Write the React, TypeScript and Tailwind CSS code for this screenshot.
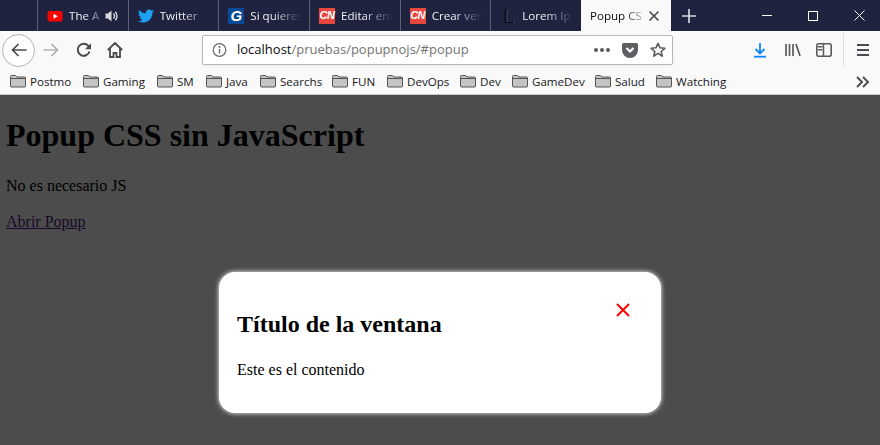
import { FaTwitter } from "react-icons/fa";

const uiFont = "font-['Open_Sans','Noto_Sans',sans-serif]";

const fade = "[mask-image:linear-gradient(to_right,black_40%,transparent_92%)]";

function Youtube() {
  return (
    <svg width="16" height="16" viewBox="0 0 16 16" className="shrink-0">
      <rect x="0.5" y="3" width="15" height="10.5" rx="2.5" fill="#ff0000" />
      <path d="M6.5 5.8v5l4.2-2.5z" fill="#fff" />
    </svg>
  );
}

function CnIcon() {
  return (
    <div className="flex h-4 w-4 shrink-0 items-center justify-center bg-[#e8473f] font-['Liberation_Sans',sans-serif] text-[11px] font-bold italic leading-none tracking-[-0.5px] text-white">
      CN
    </div>
  );
}

function GIcon() {
  return (
    <div className="flex h-4 w-4 shrink-0 items-center justify-center bg-[#0a4a94] font-['Liberation_Sans',sans-serif] text-[15px] font-bold italic leading-none text-white">
      G
    </div>
  );
}

function LoremIcon() {
  return <div className="flex h-4 w-4 shrink-0 items-center justify-center font-['Liberation_Serif',serif] text-[20px] leading-none text-[#0b0c18] [text-shadow:1px_0_0_#4a4c60]">L</div>;
}

function Speaker() {
  return (
    <svg width="14" height="14" viewBox="0 0 14 14" className="shrink-0">
      <path d="M0.5 4.5h2.5L6.5 1.5v11L3 9.5H0.5z" fill="#d8d9e0" />
      <path d="M8.5 4.5a3.5 3.5 0 0 1 0 5M10.3 2.8a6 6 0 0 1 0 8.4" fill="none" stroke="#d8d9e0" strokeWidth="1.4" />
    </svg>
  );
}

function Tab({ icon, label, extra, mask = fade }: { icon: React.ReactNode; label: string; extra?: React.ReactNode; mask?: string }) {
  return (
    <div className="flex h-full w-[90.67px] shrink-0 items-center gap-[6px] border-l border-[#5c5f75] pl-[9px] pr-[3px]">
      {icon}
      <span className={`min-w-0 flex-1 whitespace-nowrap text-[11.6px] text-[#f0f0f4] ${mask}`}>{label}</span>
      {extra}
    </div>
  );
}

function Folder() {
  return (
    <svg width="16" height="14" viewBox="0 0 16 14" className="shrink-0">
      <path d="M0.5 2.5a1 1 0 0 1 1-1h4l1.5 1.5h7.5a1 1 0 0 1 1 1v8a1 1 0 0 1-1 1h-13a1 1 0 0 1-1-1z" fill="#c4c4c4" stroke="#555" />
      <path d="M1 4.5h14" stroke="#555" />
    </svg>
  );
}

export default function App() {
  return (
    <div className="flex h-[445px] w-[880px] flex-col overflow-hidden bg-white">
      <header className={`${uiFont} shrink-0`}>
        {/* tab strip */}
        <div className="flex h-[31px] items-stretch bg-[#202340]">
          <div className="w-[37px] shrink-0" />
          <Tab
            icon={<Youtube />}
            label="The A"
            mask="[mask-image:linear-gradient(to_right,black_55%,rgba(0,0,0,0.35)_100%)]"
            extra={<span className="mr-[6px]"><Speaker /></span>}
          />
          <Tab icon={<FaTwitter className="shrink-0 text-[16px] text-[#1da1f2]" />} label="Twitter" />
          <Tab icon={<GIcon />} label="Si quieres" />
          <Tab icon={<CnIcon />} label="Editar ent" />
          <Tab icon={<CnIcon />} label="Crear ven" />
          <Tab icon={<LoremIcon />} label="Lorem Ip" />
          <div className="flex h-full w-[90px] shrink-0 items-center bg-[#f9f9fa] pl-[9px] pr-[11px]">
            <span className="min-w-0 flex-1 whitespace-nowrap text-[11.6px] text-[#0c0c0d] [mask-image:linear-gradient(to_right,black_60%,transparent_100%)]">Popup CS</span>
            <svg width="12" height="12" viewBox="0 0 12 12" className="shrink-0">
              <path d="M1.5 1.5l9 9M10.5 1.5l-9 9" stroke="#4a4a4f" strokeWidth="1.7" />
            </svg>
          </div>
          <div className="flex w-[36px] shrink-0 items-center justify-center">
            <svg width="14" height="14" viewBox="0 0 14 14">
              <path d="M7 0v14M0 7h14" stroke="#d8d9e0" strokeWidth="1.7" />
            </svg>
          </div>
          <div className="flex-1" />
          <div className="flex w-[136px] shrink-0 items-center">
            <div className="flex w-[46px] items-center justify-center">
              <div className="h-px w-[10px] bg-white" />
            </div>
            <div className="flex w-[46px] items-center justify-center">
              <div className="h-[10px] w-[10px] border border-white" />
            </div>
            <div className="flex w-[44px] items-center justify-center pl-[2px]">
              <svg width="11" height="11" viewBox="0 0 11 11">
                <path d="M0.5 0.5l10 10M10.5 0.5l-10 10" stroke="#fff" strokeWidth="1" />
              </svg>
            </div>
          </div>
        </div>

        {/* nav bar */}
        <div className="flex h-[38px] items-center bg-[#f9f9fa] pl-[2px]">
          <div className="flex h-[33px] w-[33px] shrink-0 items-center justify-center rounded-full border border-[#b1b1b3] bg-white">
            <svg width="16" height="16" viewBox="0 0 16 16">
              <path d="M15.5 8H1.5M7.5 2L1.5 8l6 6" fill="none" stroke="#4a4a4f" strokeWidth="1.7" />
            </svg>
          </div>
          <div className="ml-[8px] flex w-[16px] shrink-0 justify-center">
            <svg width="16" height="16" viewBox="0 0 16 16">
              <path d="M0.5 8h14M8.5 2l6 6-6 6" fill="none" stroke="#b1b1b3" strokeWidth="1.7" />
            </svg>
          </div>
          <div className="ml-[17px] flex w-[16px] shrink-0 justify-center">
            <svg width="16" height="16" viewBox="0 0 16 16">
              <path d="M13.5 9.5A6 6 0 1 1 12.3 3.8L14.5 6" fill="none" stroke="#4a4a4f" strokeWidth="2" />
              <path d="M15 1.2v6h-6z" fill="#4a4a4f" />
            </svg>
          </div>
          <div className="ml-[15px] flex w-[16px] shrink-0 justify-center">
            <svg width="16" height="16" viewBox="0 0 16 16">
              <path d="M0.8 8L8 1l7.2 7M3 6.5V15h3.5v-4h3v4H13V6.5" fill="none" stroke="#4a4a4f" strokeWidth="1.8" />
            </svg>
          </div>
          <div className="ml-[79px] flex h-[30px] w-[471px] shrink-0 items-center rounded-[2px] border border-[#b8b8ba] bg-white pl-[9px] pr-[6px] shadow-[0_1px_2px_rgba(0,0,0,0.08)]">
            <svg width="16" height="16" viewBox="0 0 16 16" className="shrink-0">
              <circle cx="7.5" cy="8" r="6.3" fill="none" stroke="#6a6a6e" strokeWidth="1.2" />
              <path d="M7.5 7v4.5" stroke="#6a6a6e" strokeWidth="1.4" />
              <circle cx="7.5" cy="4.9" r="1" fill="#6a6a6e" />
            </svg>
            <div className="ml-[9px] flex-1 whitespace-nowrap text-[13px] text-[#0c0c0d]">
              localhost<span className="text-[#737373]">/pruebas/popupnojs/#popup</span>
            </div>
            <div className="flex items-center gap-[2px]">
              <span className="h-[4px] w-[4px] rounded-full bg-[#5a5a5e]" />
              <span className="h-[4px] w-[4px] rounded-full bg-[#5a5a5e]" />
              <span className="h-[4px] w-[4px] rounded-full bg-[#5a5a5e]" />
            </div>
            <svg width="16" height="16" viewBox="0 0 16 16" className="ml-[12px] shrink-0">
              <path d="M1.5 1h13A1.5 1.5 0 0 1 16 2.5V8a8 8 0 0 1-16 0V2.5A1.5 1.5 0 0 1 1.5 1z" fill="#5f5f63" />
              <path d="M4.5 6L8 9.5 11.5 6" fill="none" stroke="#fff" strokeWidth="2.2" />
            </svg>
            <svg width="16" height="16" viewBox="0 0 16 16" className="ml-[12px] shrink-0">
              <path d="M8 1.4l2 4.4 4.8.5-3.6 3.2 1 4.7L8 11.4l-4.2 2.8 1-4.7L1.2 6.3 6 5.8z" fill="none" stroke="#5a5a5e" strokeWidth="1.6" strokeLinejoin="round" />
            </svg>
          </div>
          <div className="ml-[80px] flex w-[14px] shrink-0 justify-center">
            <svg width="14" height="16" viewBox="0 0 14 16">
              <path d="M7 1v10M2.5 7L7 11.5 11.5 7" fill="none" stroke="#0a84ff" strokeWidth="1.8" />
              <path d="M1 14.7h12" stroke="#0a84ff" strokeWidth="1.8" />
            </svg>
          </div>
          <div className="ml-[18px] flex w-[16px] shrink-0 justify-center">
            <svg width="16" height="14" viewBox="0 0 16 14">
              <path d="M1 1v12M4.5 1v12M8 1v12M11 1l4 12" fill="none" stroke="#5a5a5e" strokeWidth="1.7" />
            </svg>
          </div>
          <div className="ml-[15px] flex w-[16px] shrink-0 justify-center">
            <svg width="16" height="14" viewBox="0 0 16 14">
              <rect x="0.8" y="0.8" width="14.4" height="12.4" rx="2" fill="none" stroke="#5a5a5e" strokeWidth="1.6" />
              <rect x="2" y="3" width="4.5" height="1.5" fill="#5a5a5e" />
              <rect x="2" y="6" width="4.5" height="1.5" fill="#5a5a5e" />
              <path d="M7.5 1v12" stroke="#5a5a5e" strokeWidth="1.5" />
            </svg>
          </div>
          <div className="ml-[11px] h-[34px] w-px shrink-0 bg-[#dfdfe0]" />
          <div className="ml-[13px] flex w-[12px] shrink-0 flex-col gap-[3px]">
            <div className="h-[2px] bg-[#4a4a4f]" />
            <div className="h-[2px] bg-[#4a4a4f]" />
            <div className="h-[2px] bg-[#4a4a4f]" />
          </div>
        </div>

        {/* bookmarks bar */}
        <div className="flex h-[26px] items-center border-b border-[#c9c9cb] bg-[#f9f9fa] pl-[10px] pr-[10px] text-[11.6px] text-[#18181a]">
          <div className="flex flex-1 items-center">
            <div className="flex w-[73px] shrink-0 items-center gap-[4px]"><Folder />Postmo</div>
            <div className="flex w-[74px] shrink-0 items-center gap-[4px]"><Folder />Gaming</div>
            <div className="flex w-[49px] shrink-0 items-center gap-[4px]"><Folder />SM</div>
            <div className="flex w-[54px] shrink-0 items-center gap-[4px]"><Folder />Java</div>
            <div className="flex w-[72px] shrink-0 items-center gap-[4px]"><Folder />Searchs</div>
            <div className="flex w-[55px] shrink-0 items-center gap-[4px]"><Folder />FUN</div>
            <div className="flex w-[73px] shrink-0 items-center gap-[4px]"><Folder />DevOps</div>
            <div className="flex w-[52px] shrink-0 items-center gap-[4px]"><Folder />Dev</div>
            <div className="flex w-[83px] shrink-0 items-center gap-[4px]"><Folder />GameDev</div>
            <div className="flex w-[61px] shrink-0 items-center gap-[4px]"><Folder />Salud</div>
            <div className="flex items-center gap-[4px]"><Folder />Watching</div>
          </div>
          <svg width="14" height="12" viewBox="0 0 14 12" className="shrink-0">
            <path d="M1 1l5 5-5 5M7 1l5 5-5 5" fill="none" stroke="#4a4a4f" strokeWidth="1.9" />
          </svg>
        </div>
      </header>

      {/* page */}
      <main className="relative flex-1 overflow-hidden px-[6px] font-['Liberation_Serif',serif] text-[16px] text-black">
        <h1 className="mt-[22px] text-[32px] font-bold leading-[37px]">Popup CSS sin JavaScript</h1>
        <p className="mt-[23px] leading-[18px]">No es necesario JS</p>
        <p className="mt-[18px] leading-[18px]">
          <a href="#popup" className="text-[#551a8b] underline">Abrir Popup</a>
        </p>

        <div className="absolute inset-0 flex justify-center bg-black/70 pt-[177px]">
          <div className="relative h-[141px] w-[442px] rounded-[16px] bg-white px-[18px] pt-[39px] shadow-[0_0_5px_#fff]">
            <h2 className="text-[24px] font-bold leading-[27px]">Título de la ventana</h2>
            <p className="mt-[23px] leading-[18px]">Este es el contenido</p>
            <svg width="14" height="14" viewBox="0 0 14 14" className="absolute right-[31px] top-[31px]">
              <path d="M1 1l12 12M13 1L1 13" stroke="#ff0000" strokeWidth="2" />
            </svg>
          </div>
        </div>
      </main>
    </div>
  );
}
